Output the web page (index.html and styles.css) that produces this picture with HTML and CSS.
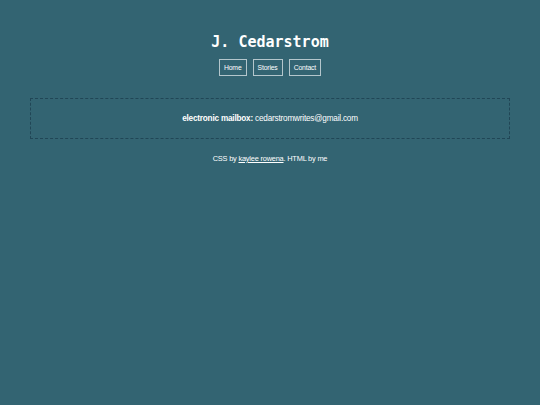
FILE: index.html
```html
<!DOCTYPE html>
<html>
<head>
<meta charset="utf-8">
<link rel="stylesheet" href="styles.css">
</head>
<body>
<header class="header">
  <h1 class="title">J. Cedarstrom</h1>
  <nav class="nav">
    <a class="nav-link" href="#">Home</a>
    <a class="nav-link" href="#">Stories</a>
    <a class="nav-link" href="#">Contact</a>
  </nav>
</header>
<main class="main">
  <div class="contact-box">
    <p class="contact-text"><b>electronic mailbox:</b> cedarstromwrites@gmail.com</p>
  </div>
</main>
<footer class="footer">CSS by <a class="footer-link" href="#">kaylee rowena</a>. HTML by me</footer>
</body>
</html>
```
FILE: styles.css
```css
html, body {
  margin: 0;
  padding: 0;
}
body {
  background: #336472;
  color: #ffffff;
  font-family: "Liberation Sans", Arial, sans-serif;
  width: 540px;
  height: 405px;
}
.header {
  display: flex;
  flex-direction: column;
  align-items: center;
  padding-top: 33px;
}
.title {
  margin: 0;
  font-family: "DejaVu Sans Mono", monospace;
  font-weight: bold;
  font-size: 15px;
  line-height: 18px;
  color: #ffffff;
}
.nav {
  display: flex;
  gap: 6px;
  margin-top: 8px;
}
.nav-link {
  display: block;
  border: 1px solid #b4c6cc;
  color: #ffffff;
  text-decoration: none;
  font-size: 6.8px;
  letter-spacing: -0.15px;
  line-height: 15px;
  padding: 0 4px;
}
.main {
  padding: 22px 30px 0;
}
.contact-box {
  border: 1px dashed #214656;
  height: 39px;
  display: flex;
  align-items: center;
  justify-content: center;
}
.contact-text {
  margin: 0;
  font-size: 8.2px;
  letter-spacing: -0.2px;
}
.footer {
  text-align: center;
  font-size: 7.4px;
  letter-spacing: -0.2px;
  margin-top: 15px;
}
.footer-link {
  color: #ffffff;
}
```
